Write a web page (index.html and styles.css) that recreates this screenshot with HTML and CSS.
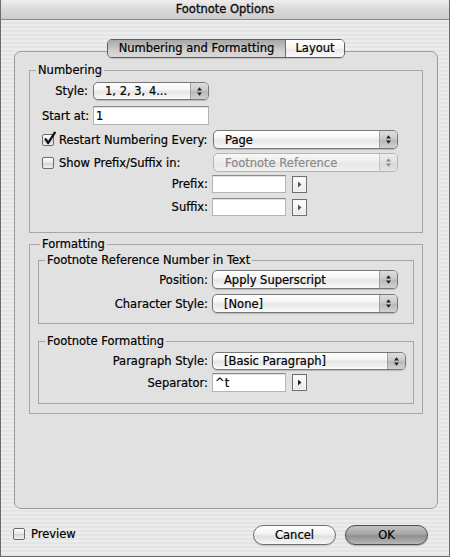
FILE: index.html
```html
<!DOCTYPE html>
<html>
<head>
<meta charset="utf-8">
<title>Footnote Options</title>
<link rel="stylesheet" href="styles.css">
</head>
<body>
<div class="window">
  <div class="titlebar">Footnote Options</div>
  <div class="content">
    <div class="tabs">
      <div class="seg">
        <div class="tab tab-sel">Numbering and Formatting</div>
        <div class="tab tab-layout">Layout</div>
      </div>
    </div>
    <div class="panel">
      <fieldset class="group numbering">
        <legend>Numbering</legend>
        <div class="row r1">
          <span class="lbl lbl-short">Style:</span>
          <div class="popup p-style"><span class="ptext">1, 2, 3, 4...</span><span class="parrows"><svg width="7" height="11" viewBox="0 0 7 11"><path d="M3.5 1.2 L6 4.4 H1 Z M3.5 9.8 L6 6.6 H1 Z" fill="#222"/></svg></span></div>
        </div>
        <div class="row r2">
          <span class="lbl lbl-short">Start at:</span>
          <div class="field f-start">1</div>
        </div>
        <div class="row r3">
          <span class="lbl lbl-check"><span class="cb"><svg class="check" width="14" height="15" viewBox="0 0 14 15"><path d="M2.6 8.2 L5.2 12 L11.8 1.6" fill="none" stroke="#111" stroke-width="2.3" stroke-linecap="round" stroke-linejoin="round"/></svg></span>Restart Numbering Every:</span>
          <div class="popup p-wide"><span class="ptext">Page</span><span class="parrows"><svg width="7" height="11" viewBox="0 0 7 11"><path d="M3.5 1.2 L6 4.4 H1 Z M3.5 9.8 L6 6.6 H1 Z" fill="#222"/></svg></span></div>
        </div>
        <div class="row r4">
          <span class="lbl lbl-check"><span class="cb"></span>Show Prefix/Suffix in:</span>
          <div class="popup p-wide disabled"><span class="ptext">Footnote Reference</span><span class="parrows"><svg width="7" height="11" viewBox="0 0 7 11"><path d="M3.5 1.2 L6 4.4 H1 Z M3.5 9.8 L6 6.6 H1 Z" fill="#8a8a8a"/></svg></span></div>
        </div>
        <div class="row r5">
          <span class="lbl lbl-long">Prefix:</span>
          <div class="field f-small"></div>
          <div class="arrowbtn"><svg width="5" height="7" viewBox="0 0 5 7"><path d="M1 0.5 L4.5 3.5 L1 6.5 Z" fill="#555"/></svg></div>
        </div>
        <div class="row r6">
          <span class="lbl lbl-long">Suffix:</span>
          <div class="field f-small"></div>
          <div class="arrowbtn"><svg width="5" height="7" viewBox="0 0 5 7"><path d="M1 0.5 L4.5 3.5 L1 6.5 Z" fill="#555"/></svg></div>
        </div>
      </fieldset>

      <fieldset class="group formatting">
        <legend>Formatting</legend>
        <fieldset class="group sub sub1">
          <legend>Footnote Reference Number in Text</legend>
          <div class="row s1">
            <span class="lbl lbl-sub">Position:</span>
            <div class="popup p-pos"><span class="ptext">Apply Superscript</span><span class="parrows"><svg width="7" height="11" viewBox="0 0 7 11"><path d="M3.5 1.2 L6 4.4 H1 Z M3.5 9.8 L6 6.6 H1 Z" fill="#222"/></svg></span></div>
          </div>
          <div class="row s2">
            <span class="lbl lbl-sub">Character Style:</span>
            <div class="popup p-pos"><span class="ptext">[None]</span><span class="parrows"><svg width="7" height="11" viewBox="0 0 7 11"><path d="M3.5 1.2 L6 4.4 H1 Z M3.5 9.8 L6 6.6 H1 Z" fill="#222"/></svg></span></div>
          </div>
        </fieldset>
        <fieldset class="group sub sub2">
          <legend>Footnote Formatting</legend>
          <div class="row s3">
            <span class="lbl lbl-sub">Paragraph Style:</span>
            <div class="popup p-para"><span class="ptext">[Basic Paragraph]</span><span class="parrows"><svg width="7" height="11" viewBox="0 0 7 11"><path d="M3.5 1.2 L6 4.4 H1 Z M3.5 9.8 L6 6.6 H1 Z" fill="#222"/></svg></span></div>
          </div>
          <div class="row s4">
            <span class="lbl lbl-sub">Separator:</span>
            <div class="field f-small">^t</div>
            <div class="arrowbtn"><svg width="5" height="7" viewBox="0 0 5 7"><path d="M1 0.5 L4.5 3.5 L1 6.5 Z" fill="#222"/></svg></div>
          </div>
        </fieldset>
      </fieldset>
    </div>

    <div class="footer">
      <label class="preview"><span class="cb"></span>Preview</label>
      <div class="buttons">
        <div class="btn btn-cancel">Cancel</div>
        <div class="btn btn-ok">OK</div>
      </div>
    </div>
  </div>
</div>
</body>
</html>
```

FILE: styles.css
```css
* { box-sizing: border-box; }
html, body { margin: 0; padding: 0; }
body {
  width: 450px;
  height: 557px;
  overflow: hidden;
  font-family: "DejaVu Sans", "Liberation Sans", sans-serif;
  font-size: 11.5px;
  color: #000;
  -webkit-text-stroke: 0.2px #000;
  background: #fff;
}

.window {
  width: 450px;
  height: 557px;
  border: 1px solid #6c6c6c;
  border-top: 0;
  background: repeating-linear-gradient(to bottom, #ececec 0, #ececec 2px, #e4e4e4 2px, #e4e4e4 4px);
  display: flex;
  flex-direction: column;
}

.titlebar {
  height: 20px;
  line-height: 19px;
  text-align: center;
  font-size: 11.5px;
  color: #111;
  -webkit-text-stroke: 0.35px #111;
  border-bottom: 1px solid #8a8a8a;
  background: linear-gradient(#ededed, #d9d9d9 50%, #cdcdcd);
}

.content {
  padding-top: 19px;
  display: flex;
  flex-direction: column;
}

/* tabs */
.tabs {
  display: flex;
  justify-content: center;
  padding-left: 2px;
  height: 19px;
  position: relative;
  z-index: 1;
}
.seg {
  display: flex;
  border: 1px solid #5e5e5e;
  border-radius: 5px;
  overflow: hidden;
  box-shadow: 0 1px 1px rgba(0,0,0,0.15);
}
.tab {
  height: 17px;
  line-height: 17px;
  text-align: center;
}
.tab-sel {
  width: 178px;
  border-right: 1px solid #6a6a6a;
  background: linear-gradient(#a8a8a8, #c2c2c2 45%, #cdcdcd 55%, #dadada);
}
.tab-layout {
  width: 58px;
  background: linear-gradient(#ffffff, #f4f4f4 50%, #e8e8e8 55%, #fafafa);
}

/* panel */
.panel {
  margin: -7px 0 0 13px;
  width: 424px;
  height: 458px;
  border: 1px solid #9c9c9c;
  border-radius: 7px;
  background: #e1e1e1;
  padding: 11px 14px 0 14px;
  display: flex;
  flex-direction: column;
}

.group {
  margin: 0;
  min-width: 0;
  border: 1px solid #a6a6a6;
}
.group > legend {
  padding: 0 2px;
  line-height: 14px;
  font-size: 11.5px;
}

.numbering {
  width: 394px;
  padding: 5px 12px 16px 12px;
}
.numbering > legend { margin-left: -6px; }

.formatting {
  width: 394px;
  margin-top: 4px;
  padding: 2px 8px 9px 8px;
}
.formatting > legend { margin-left: 2px; }

.sub {
  width: 376px;
  padding: 0;
}
.sub > legend { margin-left: 6px; }
.sub1 { padding: 3px 0 10px 0; }
.sub2 { margin-top: 10px; padding: 4px 0 11px 0; }

/* rows */
.row {
  display: flex;
  align-items: center;
}
.r1 { height: 18px; }
.r2 { height: 19px; margin-top: 6px; }
.r3 { height: 19px; margin-top: 5px; }
.r4 { height: 19px; margin-top: 4px; }
.r5 { height: 18px; margin-top: 3px; }
.r6 { height: 18px; margin-top: 5px; }
.s1 { height: 19px; }
.s2 { height: 19px; margin-top: 5px; }
.s3 { height: 18px; }
.s4 { height: 19px; margin-top: 3px; }

.lbl {
  white-space: nowrap;
  flex: none;
}
.lbl-short { width: 46px; text-align: right; margin-right: 5px; }
.lbl-check { width: 166px; margin-right: 5px; display: flex; align-items: center; }
.lbl-long { width: 166px; text-align: right; margin-right: 4px; }
.lbl-sub { width: 169px; text-align: right; margin-right: 4px; }

/* popups */
.popup {
  display: flex;
  align-items: stretch;
  height: 100%;
  border: 1px solid #777;
  border-radius: 5px;
  overflow: hidden;
  background: linear-gradient(#ffffff, #f6f6f6 40%, #e6e6e6 52%, #eeeeee 75%, #fbfbfb);
  box-shadow: 0 1px 1px rgba(0,0,0,0.18);
  flex: none;
}
.ptext {
  flex: 1;
  padding-left: 11px;
  display: flex;
  align-items: center;
  white-space: nowrap;
}
.parrows {
  width: 18px;
  border-left: 1px solid #a0a0a0;
  display: flex;
  align-items: center;
  justify-content: center;
  background: linear-gradient(#dedede, #cbcbcb 45%, #b9b9b9 55%, #d2d2d2);
}
.p-style { width: 116px; }
.p-wide { width: 185px; }
.p-pos { width: 186px; }
.p-para { width: 194px; }
.popup.disabled {
  border-color: #b4b4b4;
  box-shadow: none;
  color: #8a8a8a;
  -webkit-text-stroke: 0.2px #8a8a8a;
  background: linear-gradient(#f8f8f8, #eeeeee 50%, #e6e6e6 52%, #f0f0f0);
}
.popup.disabled .parrows {
  border-left-color: #c4c4c4;
  background: linear-gradient(#ececec, #e0e0e0 50%, #d8d8d8 52%, #e4e4e4);
}

/* text fields */
.field {
  height: 100%;
  background: #fff;
  border: 1px solid #b4b4b4;
  border-top-color: #8a8a8a;
  box-shadow: inset 0 1px 0 #e0e0e0;
  padding-left: 2px;
  display: flex;
  align-items: center;
  flex: none;
}
.f-start { width: 116px; }
.f-small { width: 74px; }

.arrowbtn {
  width: 15px;
  height: 17px;
  margin-left: 6px;
  border: 1px solid #6e6e6e;
  background: linear-gradient(#ffffff, #e8e8e8);
  box-shadow: inset 0 0 0 1px #f6f6f6;
  display: flex;
  align-items: center;
  justify-content: center;
  flex: none;
}

/* checkboxes */
.cb {
  position: relative;
  width: 12px;
  height: 12px;
  border: 1px solid #6a6a6a;
  border-radius: 2px;
  background: linear-gradient(#ffffff, #e6e6e6 50%, #d6d6d6 55%, #f2f2f2);
  margin-right: 5px;
  flex: none;
}
.check {
  position: absolute;
  left: 0;
  top: -4px;
  overflow: visible;
}

/* footer */
.footer {
  display: flex;
  align-items: center;
  justify-content: space-between;
  padding: 16px 21px 0 12px;
}
.preview {
  display: flex;
  align-items: center;
  margin-top: -3px;
}
.preview .cb { margin-right: 6px; }
.buttons {
  display: flex;
  gap: 9px;
}
.btn {
  width: 83px;
  height: 20px;
  border-radius: 10px;
  text-align: center;
  line-height: 18px;
}
.btn-cancel {
  border: 1px solid #6e6e6e;
  background: linear-gradient(#ffffff, #f2f2f2 45%, #e0e0e0 55%, #f6f6f6);
  box-shadow: 0 1px 1px rgba(0,0,0,0.18);
}
.btn-ok {
  border: 1px solid #4e4e4e;
  background: linear-gradient(#c4c4c4, #a6a6a6 45%, #8f8f8f 55%, #b8b8b8);
  box-shadow: 0 1px 1px rgba(0,0,0,0.25);
}
```
